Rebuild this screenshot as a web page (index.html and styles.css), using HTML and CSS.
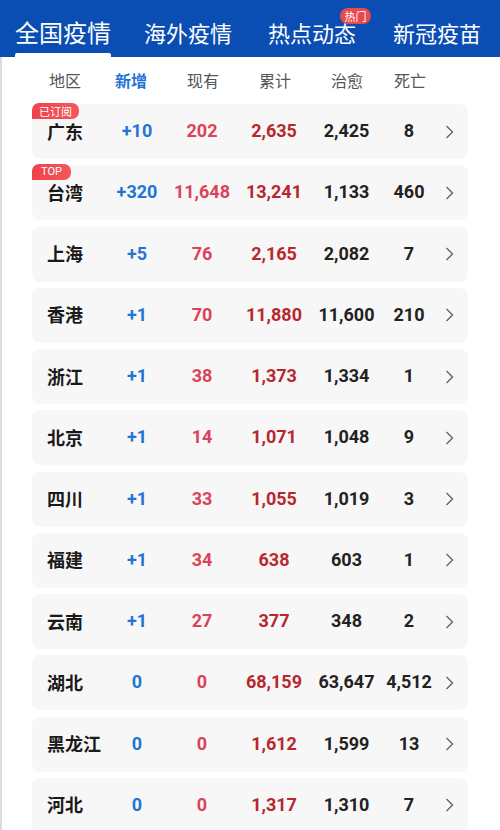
FILE: index.html
```html
<!DOCTYPE html>
<html lang="zh">
<head>
<meta charset="utf-8">
<link rel="stylesheet" href="styles.css">
</head>
<body>
<nav class="nav">
  <div class="tab active">全国疫情</div>
  <div class="tab tab2">海外疫情</div>
  <div class="tab tab3">热点动态<span class="hot-badge">热门</span></div>
  <div class="tab tab4">新冠疫苗</div>
</nav>
<main class="content">
  <div class="thead">
    <span class="th th-name">地区</span>
    <span class="th th-new">新增</span>
    <span class="th">现有</span>
    <span class="th">累计</span>
    <span class="th">治愈</span>
    <span class="th">死亡</span>
  </div>
  <div class="list">
    <div class="row"><span class="tag">已订阅</span><span class="name">广东</span><span class="num new">+10</span><span class="num cur">202</span><span class="num total">2,635</span><span class="num dark">2,425</span><span class="num dark">8</span><span class="arrow"><svg width="9" height="14" viewBox="0 0 9 14"><polyline points="1.5,1 7.5,7 1.5,13" fill="none" stroke="#666" stroke-width="1.4"/></svg></span></div>
    <div class="row"><span class="tag top">TOP</span><span class="name">台湾</span><span class="num new">+320</span><span class="num cur">11,648</span><span class="num total">13,241</span><span class="num dark">1,133</span><span class="num dark">460</span><span class="arrow"><svg width="9" height="14" viewBox="0 0 9 14"><polyline points="1.5,1 7.5,7 1.5,13" fill="none" stroke="#666" stroke-width="1.4"/></svg></span></div>
    <div class="row"><span class="name">上海</span><span class="num new">+5</span><span class="num cur">76</span><span class="num total">2,165</span><span class="num dark">2,082</span><span class="num dark">7</span><span class="arrow"><svg width="9" height="14" viewBox="0 0 9 14"><polyline points="1.5,1 7.5,7 1.5,13" fill="none" stroke="#666" stroke-width="1.4"/></svg></span></div>
    <div class="row"><span class="name">香港</span><span class="num new">+1</span><span class="num cur">70</span><span class="num total">11,880</span><span class="num dark">11,600</span><span class="num dark">210</span><span class="arrow"><svg width="9" height="14" viewBox="0 0 9 14"><polyline points="1.5,1 7.5,7 1.5,13" fill="none" stroke="#666" stroke-width="1.4"/></svg></span></div>
    <div class="row"><span class="name">浙江</span><span class="num new">+1</span><span class="num cur">38</span><span class="num total">1,373</span><span class="num dark">1,334</span><span class="num dark">1</span><span class="arrow"><svg width="9" height="14" viewBox="0 0 9 14"><polyline points="1.5,1 7.5,7 1.5,13" fill="none" stroke="#666" stroke-width="1.4"/></svg></span></div>
    <div class="row"><span class="name">北京</span><span class="num new">+1</span><span class="num cur">14</span><span class="num total">1,071</span><span class="num dark">1,048</span><span class="num dark">9</span><span class="arrow"><svg width="9" height="14" viewBox="0 0 9 14"><polyline points="1.5,1 7.5,7 1.5,13" fill="none" stroke="#666" stroke-width="1.4"/></svg></span></div>
    <div class="row"><span class="name">四川</span><span class="num new">+1</span><span class="num cur">33</span><span class="num total">1,055</span><span class="num dark">1,019</span><span class="num dark">3</span><span class="arrow"><svg width="9" height="14" viewBox="0 0 9 14"><polyline points="1.5,1 7.5,7 1.5,13" fill="none" stroke="#666" stroke-width="1.4"/></svg></span></div>
    <div class="row"><span class="name">福建</span><span class="num new">+1</span><span class="num cur">34</span><span class="num total">638</span><span class="num dark">603</span><span class="num dark">1</span><span class="arrow"><svg width="9" height="14" viewBox="0 0 9 14"><polyline points="1.5,1 7.5,7 1.5,13" fill="none" stroke="#666" stroke-width="1.4"/></svg></span></div>
    <div class="row"><span class="name">云南</span><span class="num new">+1</span><span class="num cur">27</span><span class="num total">377</span><span class="num dark">348</span><span class="num dark">2</span><span class="arrow"><svg width="9" height="14" viewBox="0 0 9 14"><polyline points="1.5,1 7.5,7 1.5,13" fill="none" stroke="#666" stroke-width="1.4"/></svg></span></div>
    <div class="row"><span class="name">湖北</span><span class="num new">0</span><span class="num cur">0</span><span class="num total">68,159</span><span class="num dark">63,647</span><span class="num dark">4,512</span><span class="arrow"><svg width="9" height="14" viewBox="0 0 9 14"><polyline points="1.5,1 7.5,7 1.5,13" fill="none" stroke="#666" stroke-width="1.4"/></svg></span></div>
    <div class="row"><span class="name">黑龙江</span><span class="num new">0</span><span class="num cur">0</span><span class="num total">1,612</span><span class="num dark">1,599</span><span class="num dark">13</span><span class="arrow"><svg width="9" height="14" viewBox="0 0 9 14"><polyline points="1.5,1 7.5,7 1.5,13" fill="none" stroke="#666" stroke-width="1.4"/></svg></span></div>
    <div class="row"><span class="name">河北</span><span class="num new">0</span><span class="num cur">0</span><span class="num total">1,317</span><span class="num dark">1,310</span><span class="num dark">7</span><span class="arrow"><svg width="9" height="14" viewBox="0 0 9 14"><polyline points="1.5,1 7.5,7 1.5,13" fill="none" stroke="#666" stroke-width="1.4"/></svg></span></div>
  </div>
</main>
</body>
</html>
```
FILE: styles.css
```css
* { box-sizing: border-box; }
html, body { margin: 0; padding: 0; background: #fff; }
body {
  width: 500px;
  height: 830px;
  overflow: hidden;
  font-family: "Noto Sans CJK SC", "Noto Sans", sans-serif;
}
.nav {
  height: 57px;
  background: #0b4eb3;
  display: flex;
  align-items: stretch;
  padding-left: 15px;
}
.tab {
  position: relative;
  color: #fff;
  font-size: 22px;
  line-height: 1;
  display: flex;
  align-items: center;
  padding-top: 6px;
  white-space: nowrap;
}
.tab2 { margin-left: 33px; }
.tab3 { margin-left: 36px; }
.tab4 { margin-left: 37px; }
.tab.active {
  font-size: 24px;
}
.tab.active::after {
  content: "";
  position: absolute;
  left: 0;
  right: 0;
  bottom: 0;
  height: 4px;
  background: #fff;
  border-radius: 2px 2px 0 0;
}
.hot-badge {
  position: absolute;
  left: 72px;
  top: 8px;
  width: 31px;
  height: 16px;
  border-radius: 8px;
  background: #e8484f;
  color: #fff;
  font-size: 11px;
  line-height: 16px;
  text-align: center;
}
.content {
  border-left: 2px solid #dcdcdc;
  padding-left: 30px;
  height: 773px;
}
.thead {
  height: 47px;
  display: grid;
  grid-template-columns: 50px 64px 80px 64px 80px 46px;
  padding-left: 17px;
  align-items: center;
  padding-bottom: 1px;
}
.th {
  font-size: 16px;
  color: #555;
  text-align: center;
  line-height: 1;
}
.th-name { text-align: left; }
.th-new { color: #1f74d6; font-weight: 700; }
.list {
  display: flex;
  flex-direction: column;
  gap: 6.27px;
  width: 436px;
}
.row {
  position: relative;
  height: 55px;
  flex: none;
  background: #f7f7f7;
  border-radius: 8px;
  display: grid;
  grid-template-columns: 58px 64px 66px 78px 67px 58px 23px;
  align-items: center;
  padding-left: 15px;
}
.tag {
  position: absolute;
  left: 0;
  top: -1px;
  width: 47px;
  height: 16px;
  background: linear-gradient(90deg, #f0424c, #f2585c);
  color: #fff;
  font-size: 11px;
  line-height: 16px;
  text-align: center;
  border-radius: 7px 7px 7px 0;
}
.tag.top {
  width: 39px;
  font-family: Roboto, "Noto Sans", sans-serif;
  font-size: 11px;
}
.name {
  font-size: 18px;
  font-weight: 700;
  color: #1a1a1a;
  white-space: nowrap;
  line-height: 1;
  padding-bottom: 2px;
}
.num {
  font-family: Roboto, "Noto Sans", sans-serif;
  font-weight: 700;
  font-size: 18px;
  text-align: center;
  line-height: 1;
  white-space: nowrap;
  padding-bottom: 1px;
}
.new { color: #2475d3; }
.cur { color: #db4359; }
.total { color: #b8272d; }
.dark { color: #222; }
.arrow {
  display: flex;
  justify-content: center;
  align-items: center;
}
.arrow svg { display: block; }
```
